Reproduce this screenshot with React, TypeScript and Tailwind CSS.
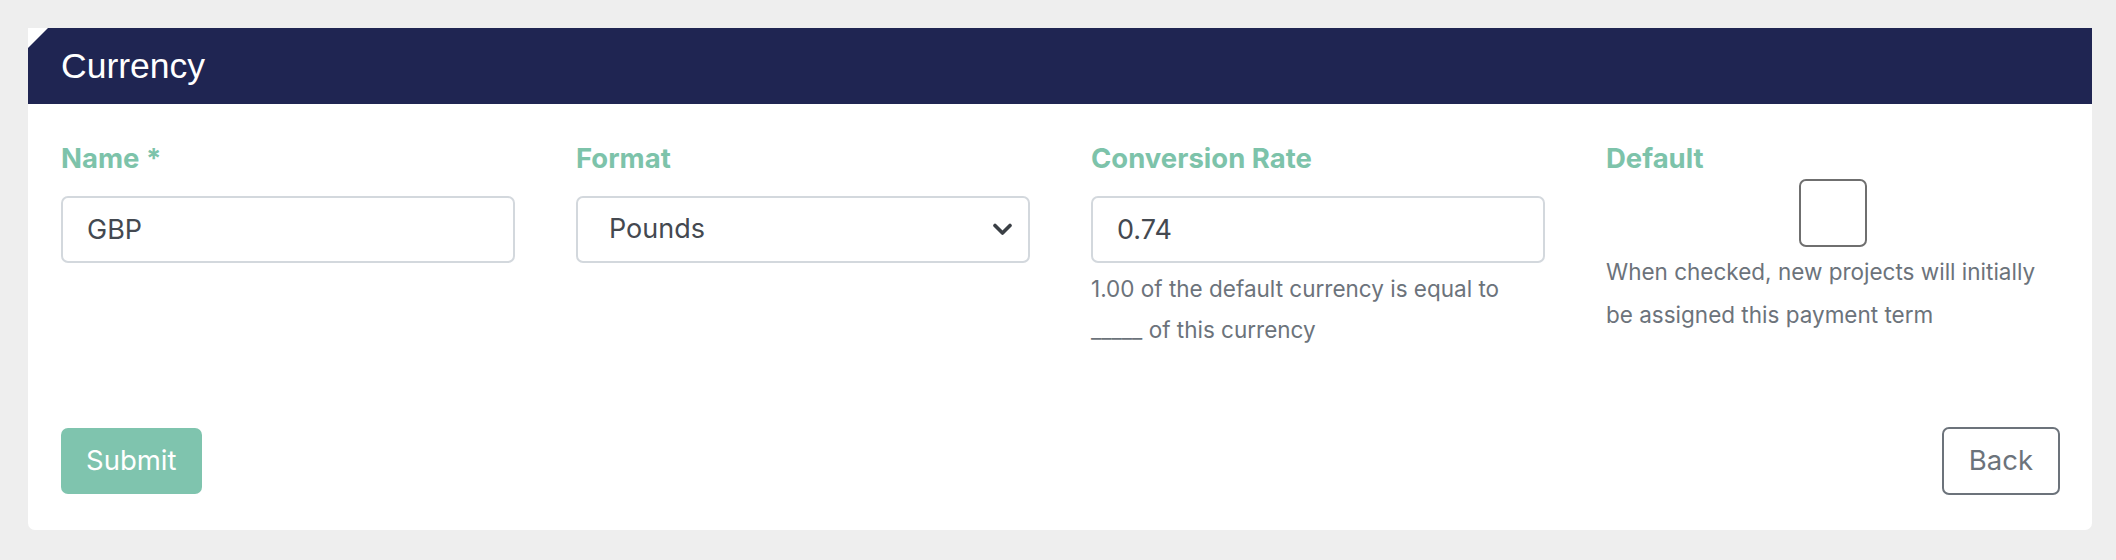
import React from 'react';

const FONT = "font-['Inter','Noto_Sans',sans-serif]";

export default function App() {
  return (
    <div className={`min-h-screen bg-[#eeeeee] pt-[28px] pb-[31px] pl-[28px] pr-[24px] ${FONT}`}>
      <div className="bg-white rounded-b-[7px]">
        {/* header */}
        <div className="h-[76px] bg-[#1f2552] flex items-center pl-[33px] [clip-path:polygon(20px_0,100%_0,100%_100%,0_100%,0_20px)]">
          <h3 className="text-white text-[35.5px] leading-[40px] font-['Liberation_Sans','Arial',sans-serif]">Currency</h3>
        </div>

        {/* body */}
        <div className="pt-[35px] pb-[35px] pl-[33px] pr-[32px]">
          <div className="grid grid-cols-4 gap-x-[61px]">
            <div>
              <label className="block text-[27.5px] leading-[39px] font-bold text-[#7dc3aa]">Name *</label>
              <input
                readOnly
                value="GBP"
                className="mt-[18px] w-full h-[67px] border-2 border-[#d3d8dd] rounded-[7px] px-[24px] text-[27px] text-[#444950] outline-none"
              />
            </div>

            <div>
              <label className="block text-[27.5px] leading-[39px] font-bold text-[#7dc3aa]">Format</label>
              <div className="mt-[18px] relative w-full h-[67px] border-2 border-[#d3d8dd] rounded-[7px] flex items-center pl-[31px] pr-[16px] text-[27px] text-[#444950]">
                <span className="flex-1">Pounds</span>
                <svg width="19" height="13" viewBox="0 0 19 13" className="shrink-0">
                  <polyline points="2,2.5 9.5,10 17,2.5" fill="none" stroke="#3a3f45" strokeWidth="3.6" strokeLinecap="round" strokeLinejoin="round" />
                </svg>
              </div>
            </div>

            <div>
              <label className="block text-[27.5px] leading-[39px] font-bold text-[#7dc3aa]">Conversion Rate</label>
              <input
                readOnly
                value="0.74"
                className="mt-[18px] w-full h-[67px] border-2 border-[#d3d8dd] rounded-[7px] px-[24px] text-[27px] text-[#444950] outline-none"
              />
              <p className="mt-[5px] text-[22.5px] leading-[41px] text-[#6c737b]">
                1.00 of the default currency is equal to
                <br />
                _____ of this currency
              </p>
            </div>

            <div>
              <label className="block text-[27.5px] leading-[39px] font-bold text-[#7dc3aa]">Default</label>
              <div className="flex justify-center mt-[1px]">
                <div className="w-[68px] h-[68px] border-2 border-[#6f6f6f] rounded-[7px] bg-white"></div>
              </div>
              <p className="mt-[3px] text-[22.5px] leading-[43px] text-[#6c737b]">
                When checked, new projects will initially be assigned this payment term
              </p>
            </div>
          </div>

          <div className="mt-[77px] flex items-center justify-between">
            <button className="h-[66px] px-[25px] rounded-[7px] bg-[#7fc4ae] text-white text-[27.5px]">Submit</button>
            <button className="h-[68px] px-[25px] rounded-[7px] border-2 border-[#6c737b] bg-white text-[#6c737b] text-[27.5px]">Back</button>
          </div>
        </div>
      </div>
    </div>
  );
}
